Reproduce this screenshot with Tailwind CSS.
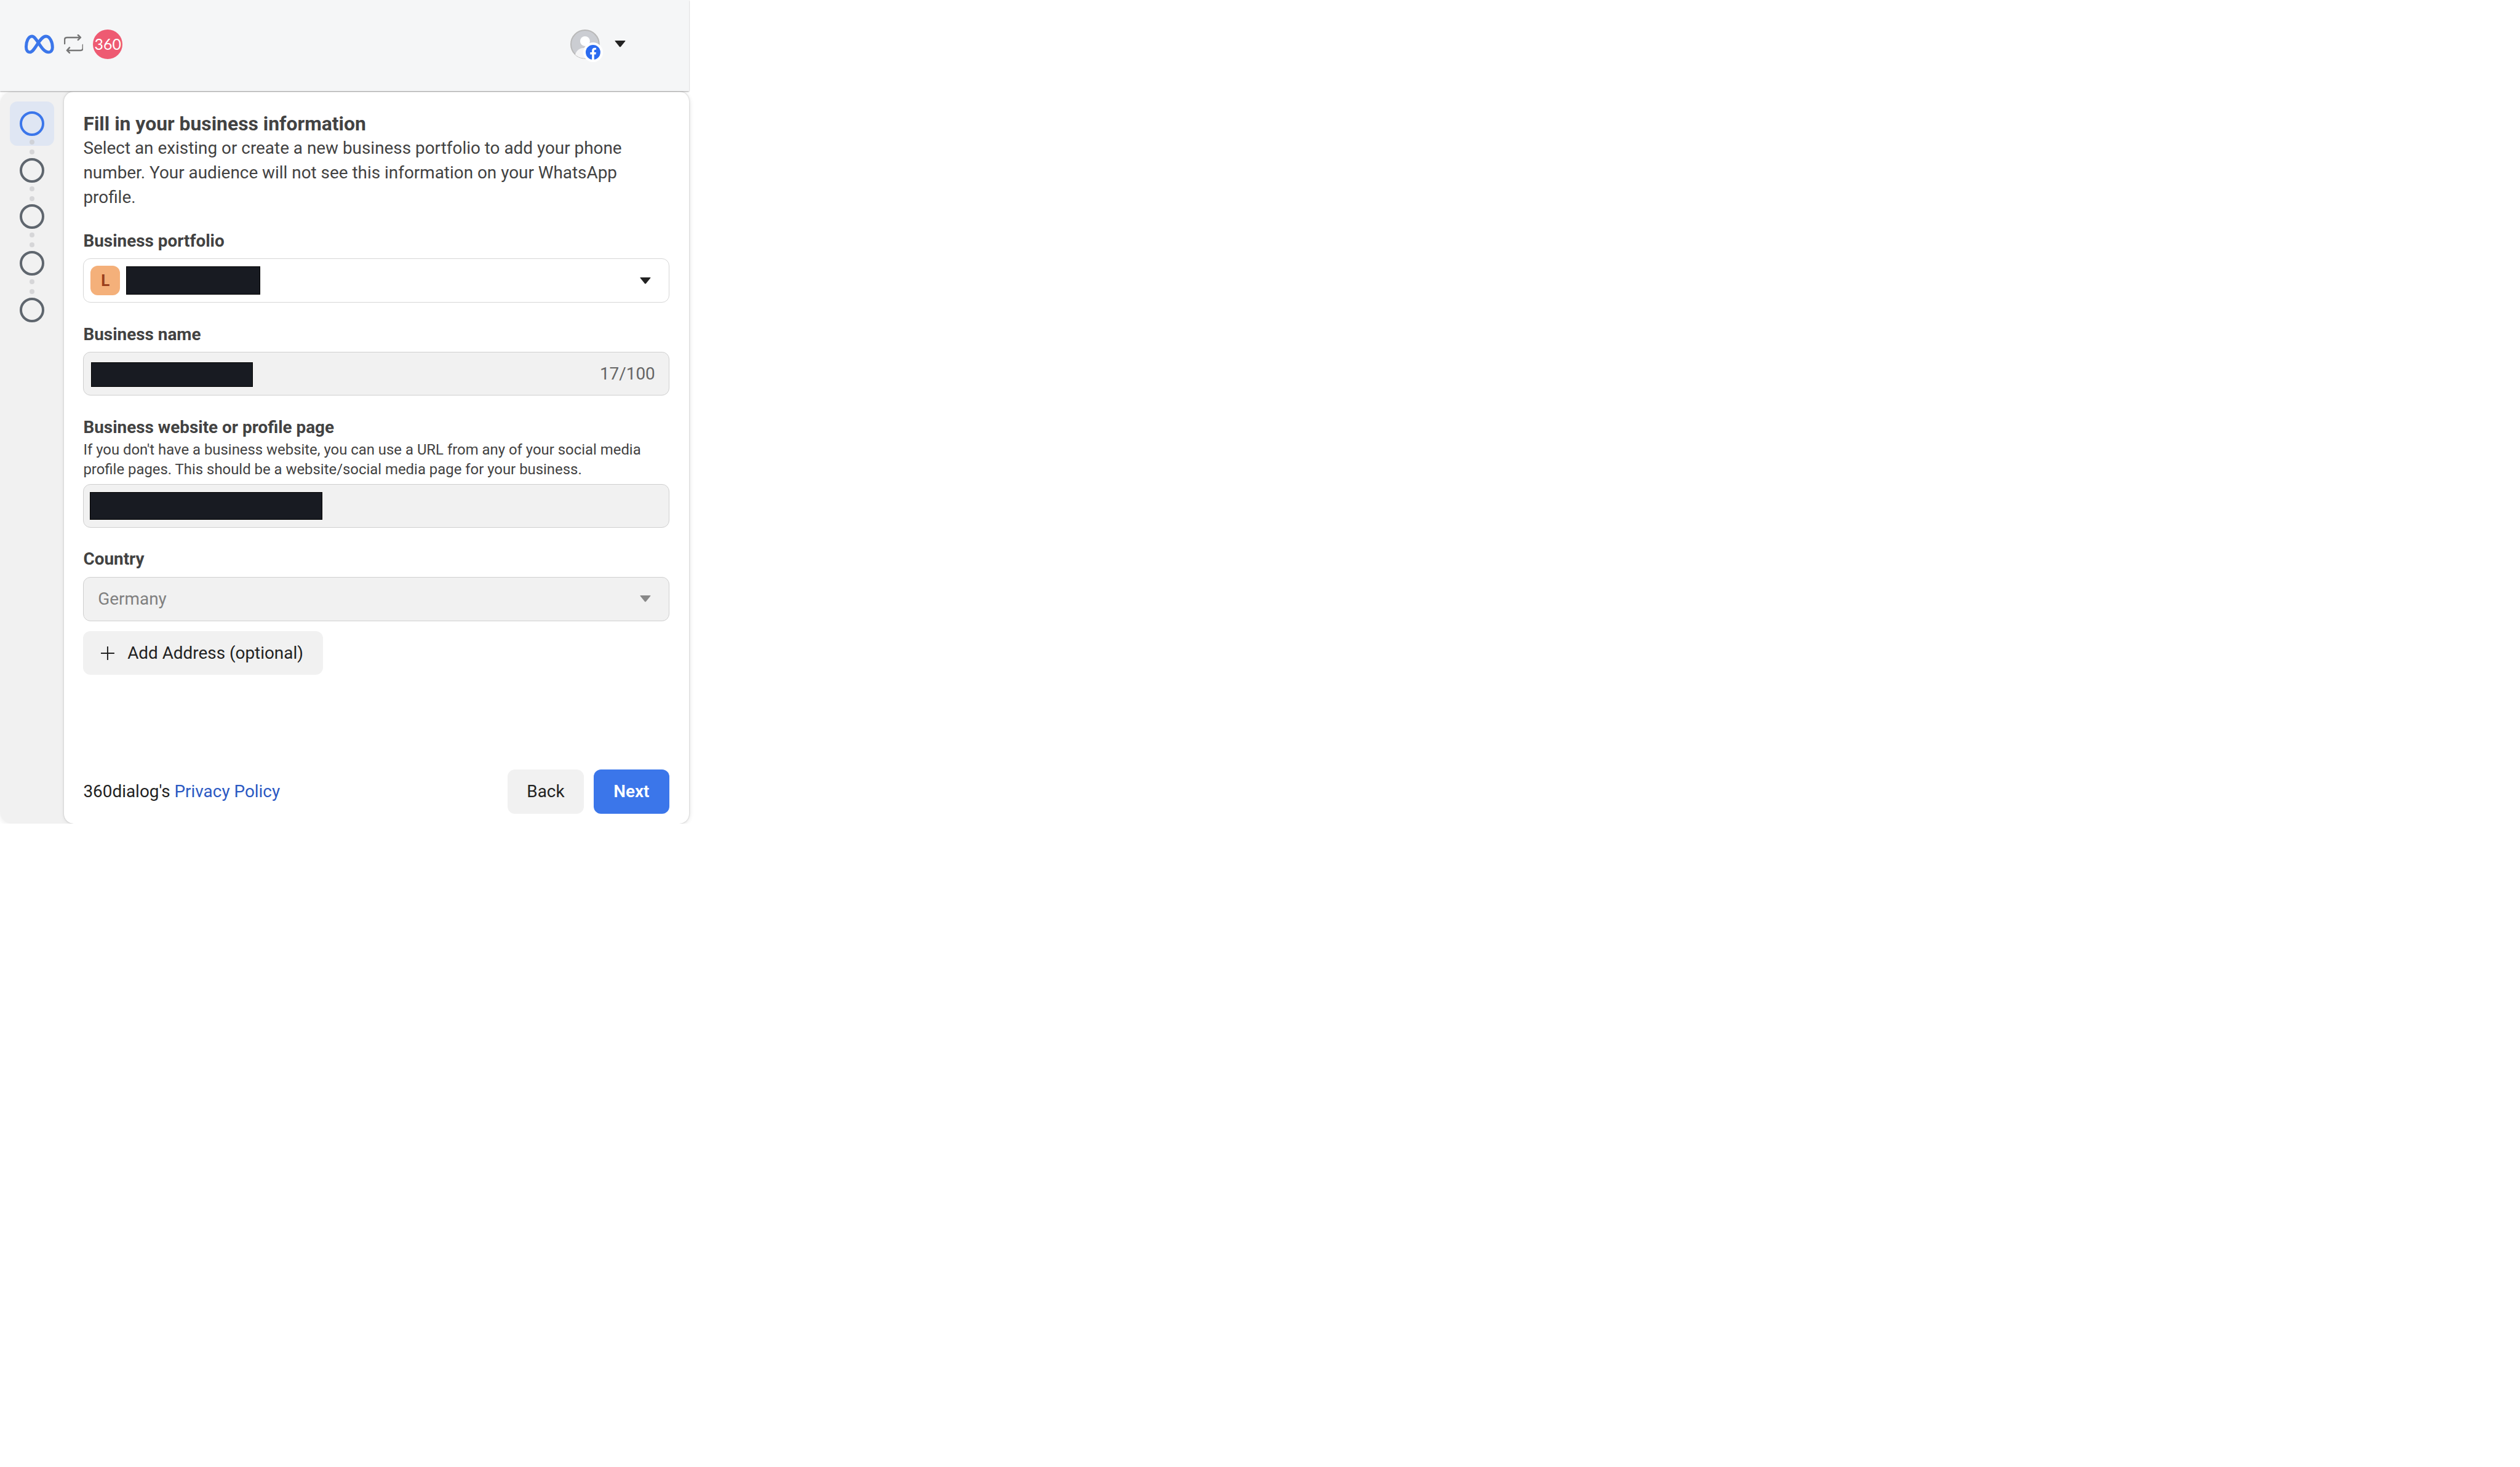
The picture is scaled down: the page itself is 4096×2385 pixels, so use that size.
<!DOCTYPE html>
<html lang="en">
<head>
<meta charset="UTF-8">
<title>Fill in your business information</title>
<script src="https://cdn.jsdelivr.net/npm/@tailwindcss/browser@4"></script>
</head>
<body class="bg-white font-['Roboto',sans-serif] text-[#424242]">
<div class="[zoom:0.996] w-[1124px]">
  <!-- Header -->
  <header class="h-[149px] bg-[#f5f6f7] flex items-center justify-between pl-[40px] pr-[103px] shadow-[0_1px_2px_rgba(0,0,0,0.35)] relative pb-[5px]">
    <div class="flex items-center">
      <svg width="48" height="32" viewBox="0 0 48 32" fill="none" stroke="#3b76ea" stroke-width="5" stroke-linejoin="round">
        <path d="M12 3C20 3 27 29 39 29 43 29 45.500 26 45.500 21 45.500 12 41 3 35 3 24 3 17 29 8.500 29 5 29 2.500 26 2.500 20 2.500 12 6 3 12 3Z"/>
      </svg>
      <svg class="ml-[16px]" width="32" height="32" viewBox="0 0 32 32" fill="none" stroke="#777" stroke-width="2.500" stroke-linecap="round" stroke-linejoin="round">
        <path d="M1 15V9Q1 5 5 5H27M23 1L27 5 23 9"/>
        <path d="M31 17V22Q31 26 27 26H5M9 21.500L5 26 9 30"/>
      </svg>
      <div class="ml-[16px] w-[48px] h-[48px] rounded-full bg-[#ee5a72] flex items-center justify-center text-white text-[25px] leading-none font-['Lato',sans-serif] font-normal">360</div>
    </div>
    <div class="flex items-center gap-[24px]">
      <div class="relative w-[48px] h-[48px]">
        <svg width="48" height="48" viewBox="0 0 48 48">
          <circle cx="24" cy="24" r="23" fill="#cbcdd2" stroke="#b9b9b9" stroke-width="2"/>
          <circle cx="24" cy="19" r="8" fill="#fff"/>
          <path d="M8 41C10 33 17 30 24 30 31 30 38 33 40 41 32 49 16 49 8 41Z" fill="#f4f4f5"/>
        </svg>
        <div class="absolute left-[21px] top-[21px] w-[32px] h-[32px] rounded-full bg-white flex items-center justify-center">
          <svg width="24" height="24" viewBox="0 0 24 24">
            <circle cx="12" cy="12" r="12" fill="#2b6bf0"/>
            <path d="M10.200 24V15.500H7.300V12H10.200V9.400C10.200 6.400 12 4.800 14.700 4.800 16 4.800 17.100 5 17.100 5V7.900H15.700C14.200 7.900 13.800 8.800 13.800 9.700V12H17L16.500 15.500H13.800V24Z" fill="#fff"/>
          </svg>
        </div>
      </div>
      <svg width="18" height="11" viewBox="0 0 18 11"><path d="M1 0H17Q18 0 17.300 1L10 10Q9 11 8 10L0.700 1Q0 0 1 0Z" fill="#222"/></svg>
    </div>
  </header>

  <!-- Panel -->
  <div class="flex h-[1194px] mt-[1px] rounded-[20px] bg-[#f1f1f1] shadow-[0_2px_10px_rgba(0,0,0,0.08)]">
    <!-- Steps rail -->
    <nav class="w-[104px] shrink-0 relative pt-[16px] flex flex-col items-center">
      <div class="absolute left-[16px] top-[16px] w-[72px] h-[72px] rounded-[12px] bg-[#dfe6f3]"></div>
      <div class="relative mt-[16px] w-[40px] h-[40px] rounded-full border-[5px] border-[#3b76ea]"></div>
      <div class="relative mt-[6px] w-[8px] h-[8px] rounded-full bg-[#cfd2d8]"></div>
      <div class="relative mt-[8px] w-[8px] h-[8px] rounded-full bg-[#d6d6d8]"></div>
      <div class="relative mt-[6px] w-[40px] h-[40px] rounded-full border-[5px] border-[#5f666e]"></div>
      <div class="mt-[6px] w-[8px] h-[8px] rounded-full bg-[#d6d6d8]"></div>
      <div class="mt-[8px] w-[8px] h-[8px] rounded-full bg-[#d6d6d8]"></div>
      <div class="mt-[6px] w-[40px] h-[40px] rounded-full border-[5px] border-[#5f666e]"></div>
      <div class="mt-[6px] w-[8px] h-[8px] rounded-full bg-[#d6d6d8]"></div>
      <div class="mt-[8px] w-[8px] h-[8px] rounded-full bg-[#d6d6d8]"></div>
      <div class="mt-[6px] w-[40px] h-[40px] rounded-full border-[5px] border-[#5f666e]"></div>
      <div class="mt-[6px] w-[8px] h-[8px] rounded-full bg-[#d6d6d8]"></div>
      <div class="mt-[8px] w-[8px] h-[8px] rounded-full bg-[#d6d6d8]"></div>
      <div class="mt-[6px] w-[40px] h-[40px] rounded-full border-[5px] border-[#5f666e]"></div>
    </nav>

    <!-- Form card -->
    <main class="flex-1 bg-white rounded-[16px] shadow-[0_0_3px_rgba(0,0,0,0.22),0_2px_10px_rgba(0,0,0,0.06)] pt-[32px] pb-[16px] pl-[32px] pr-[32px] flex flex-col">
      <h1 class="text-[32px] leading-[40px] font-bold pt-[1px] -mb-[1px]">Fill in your business information</h1>
      <p class="text-[28px] leading-[40px]">Select an existing or create a new business portfolio to add your phone number. Your audience will not see this information on your WhatsApp profile.</p>

      <label class="mt-[32px] text-[28px] leading-[40px] font-bold">Business portfolio</label>
      <div class="mt-[8px] h-[72px] rounded-[12px] border-2 border-[#d6d6d6] bg-white flex items-center pl-[11px] pr-[29px]">
        <div class="w-[48px] h-[48px] rounded-[12px] bg-[#f4b07a] text-[#9a3f1c] flex items-center justify-center text-[26px] font-bold">L</div>
        <div class="ml-[10px] w-[219px] h-[46px] bg-[#181b22] border border-black"></div>
        <svg class="ml-auto" width="18" height="11" viewBox="0 0 18 11"><path d="M1 0H17Q18 0 17.300 1L10 10Q9 11 8 10L0.700 1Q0 0 1 0Z" fill="#222"/></svg>
      </div>

      <label class="mt-[32px] text-[28px] leading-[40px] font-bold">Business name</label>
      <div class="mt-[8px] h-[72px] rounded-[12px] border-2 border-[#cfcfcf] bg-[#f1f1f1] flex items-center justify-between pl-[12px] pr-[22px]">
        <div class="w-[264px] h-[41px] mt-[3px] bg-[#181b22] border border-black"></div>
        <span class="text-[28px] leading-[40px] text-[#666]">17/100</span>
      </div>

      <label class="mt-[32px] text-[28px] leading-[40px] font-bold">Business website or profile page</label>
      <p class="text-[24px] leading-[32px] pt-[1px]">If you don't have a business website, you can use a URL from any of your social media profile pages. This should be a website/social media page for your business.</p>
      <div class="mt-[7px] h-[72px] rounded-[12px] border-2 border-[#cfcfcf] bg-[#f1f1f1] flex items-center pl-[10px]">
        <div class="w-[379px] h-[46px] bg-[#181b22] border border-black"></div>
      </div>

      <label class="mt-[31px] text-[28px] leading-[40px] font-bold">Country</label>
      <div class="mt-[9px] h-[72px] rounded-[12px] border-2 border-[#cfcfcf] bg-[#f1f1f1] flex items-center pl-[23px] pr-[29px]">
        <span class="text-[28px] leading-[40px] text-[#808080]">Germany</span>
        <svg class="ml-auto" width="18" height="11" viewBox="0 0 18 11"><path d="M1 0H17Q18 0 17.300 1L10 10Q9 11 8 10L0.700 1Q0 0 1 0Z" fill="#888"/></svg>
      </div>

      <button class="mt-[16px] self-start w-[391px] h-[72px] rounded-[12px] bg-[#f1f1f1] flex items-center pl-[29px] text-[28px] text-[#222]">
        <svg width="22" height="22" viewBox="0 0 22 22" stroke="#222" stroke-width="2"><path d="M11 0V22M0 11H22"/></svg>
        <span class="ml-[21px]">Add Address (optional)</span>
      </button>

      <footer class="mt-auto flex items-center text-[28px]">
        <p class="text-[#222]">360dialog's <a href="#" class="text-[#2b59c3]">Privacy Policy</a></p>
        <button class="ml-auto w-[125px] h-[72px] rounded-[12px] bg-[#f1f1f1] text-[#222]">Back</button>
        <button class="ml-[16px] w-[123px] h-[72px] rounded-[12px] bg-[#3b76ea] text-white font-semibold">Next</button>
      </footer>
    </main>
  </div>
</div>
</body>
</html>
